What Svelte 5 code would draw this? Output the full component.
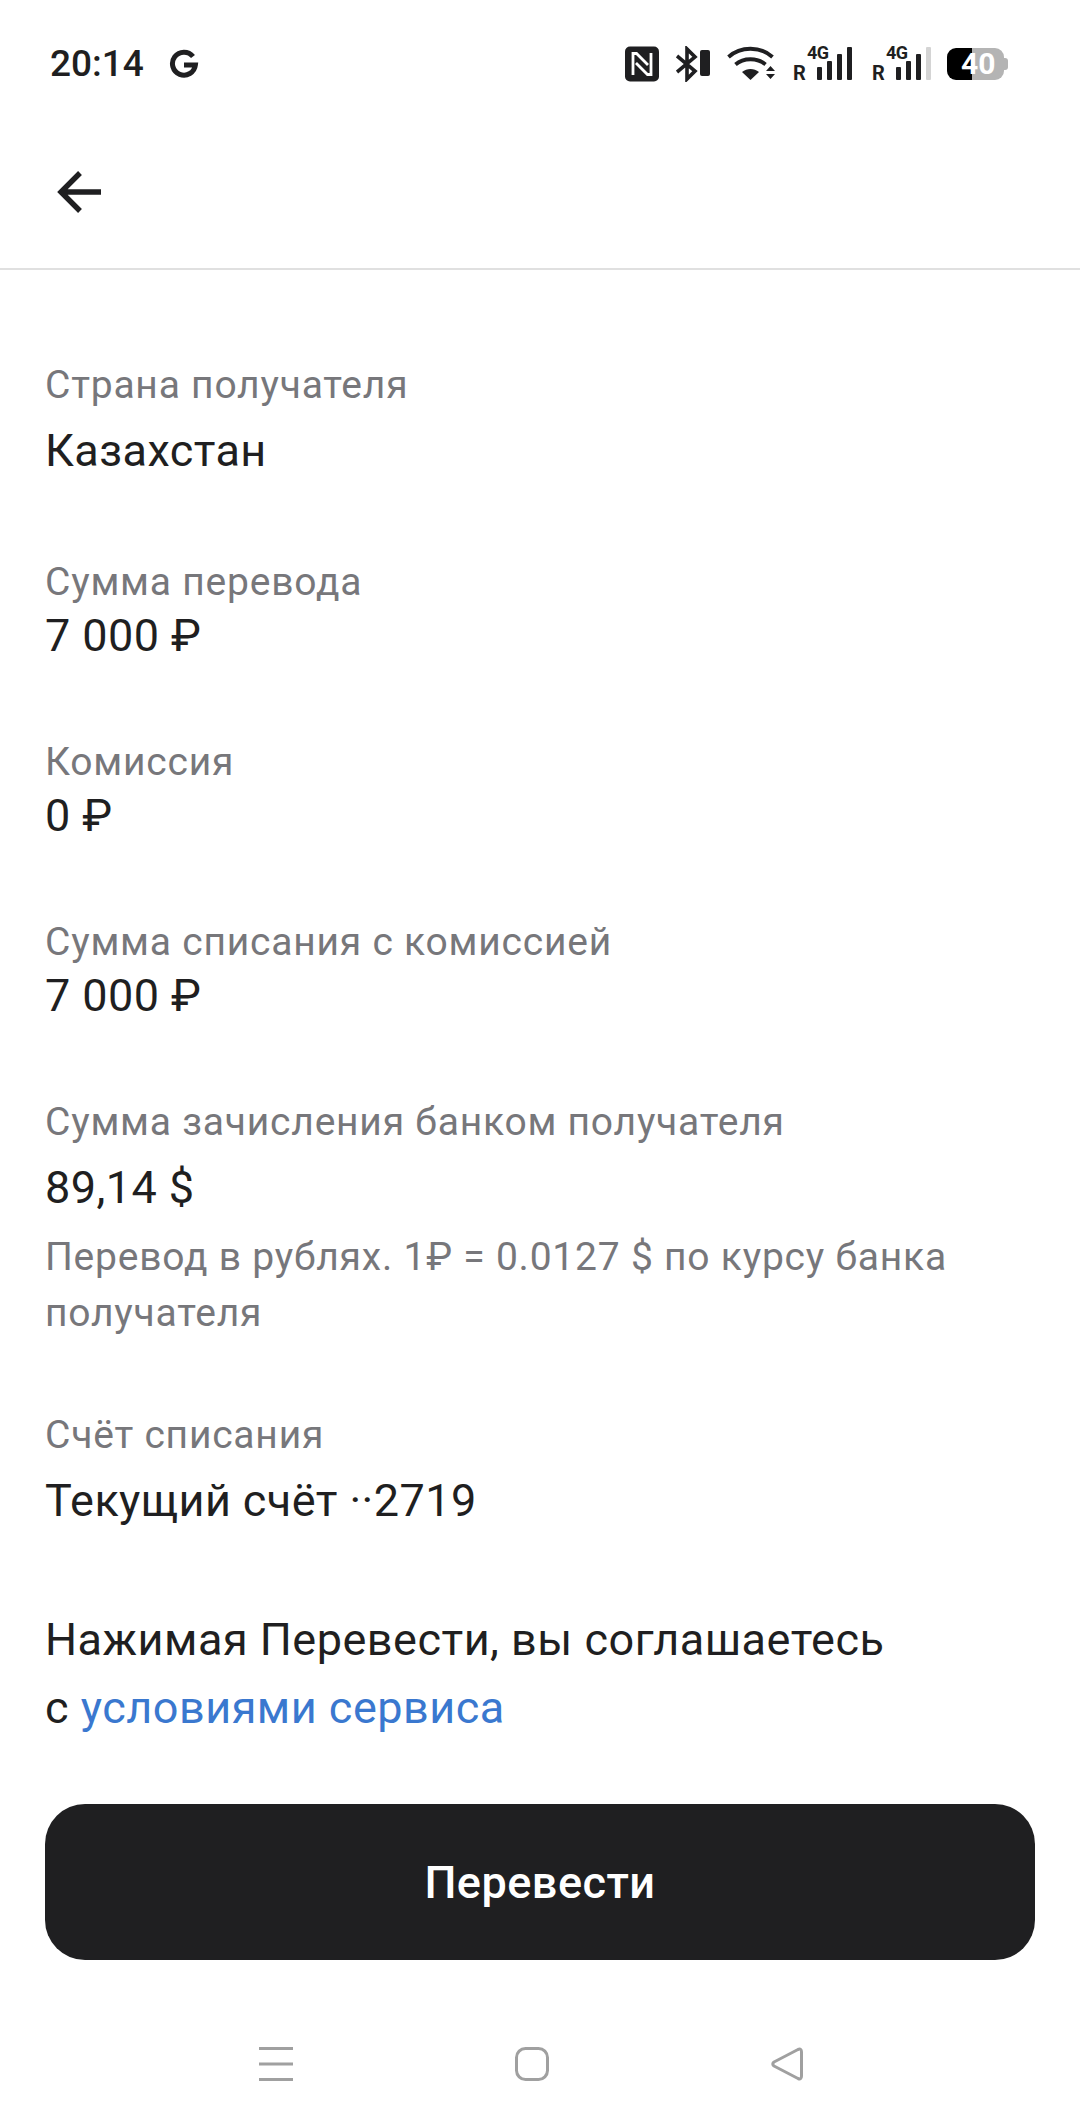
<script>
  const rows = [
    { label: 'Страна получателя', value: 'Казахстан', loose: true },
    { label: 'Сумма перевода', value: '7 000 ₽' },
    { label: 'Комиссия', value: '0 ₽' },
    { label: 'Сумма списания с комиссией', value: '7 000 ₽' },
    {
      label: 'Сумма зачисления банком получателя',
      value: '89,14 $',
      loose: true,
      note: 'Перевод в рублях. 1₽ = 0.0127 $ по курсу банка получателя'
    },
    { label: 'Счёт списания', value: 'Текущий счёт ··2719', loose: true }
  ];
</script>

<div class="screen">
  <header class="status">
    <div class="status-left">
      <span class="time">20:14</span>
      <svg class="g" width="30" height="30" viewBox="0 0 30 30">
        <path d="M24 7.500A11.500 11.500 0 1 0 26.400 16H15" fill="none" stroke="#1f1f21" stroke-width="5" />
      </svg>
    </div>
    <div class="status-icons">
      <svg width="34" height="36" viewBox="0 0 34 36">
        <rect y="0.500" width="34" height="35" rx="5" fill="#1f1f21" />
        <path d="M8 29V7.500h3.500L23 19" fill="none" stroke="#fff" stroke-width="2.800" />
        <path d="M26 7v21.500h-3.500L11 17" fill="none" stroke="#fff" stroke-width="2.800" />
      </svg>
      <svg width="34" height="36" viewBox="0 0 34 36">
        <path d="M1 10l18 15-8 8V3l8 8L1 26" fill="none" stroke="#1f1f21" stroke-width="3.600" />
        <rect x="24" y="4" width="10" height="26" rx="2" fill="#1f1f21" />
      </svg>
      <svg width="49" height="36" viewBox="0 0 49 36">
        <path d="M1.500 11c12-11 32-11 44 0M8.500 18.500c8-7 22-7 30 0" fill="none" stroke="#1f1f21" stroke-width="3.800" />
        <path d="M15 26c5-4 12-4 17 0l-8.500 8z" fill="#1f1f21" />
        <path d="M39 25l4.500-5 4.500 5zM39 28h9l-4.500 5z" fill="#1f1f21" />
      </svg>
      <div class="signal">
        <span class="roam">R</span>
        <span class="net">4G</span>
        <svg width="35" height="36" viewBox="0 0 35 36">
          <rect y="21" width="5" height="13" rx="1" fill="#1f1f21" />
          <rect x="10" y="15" width="5" height="19" rx="1" fill="#1f1f21" />
          <rect x="20" y="8" width="5" height="26" rx="1" fill="#1f1f21" />
          <rect x="30" y="1" width="5" height="33" rx="1" fill="#1f1f21" />
        </svg>
      </div>
      <div class="signal">
        <span class="roam">R</span>
        <span class="net">4G</span>
        <svg width="35" height="36" viewBox="0 0 35 36">
          <rect y="21" width="5" height="13" rx="1" fill="#1f1f21" />
          <rect x="10" y="15" width="5" height="19" rx="1" fill="#1f1f21" />
          <rect x="20" y="8" width="5" height="26" rx="1" fill="#1f1f21" />
          <rect x="30" y="1" width="5" height="33" rx="1" fill="#d4d4d4" />
        </svg>
      </div>
      <div class="battery">
        <span class="battery-text">40</span>
      </div>
    </div>
  </header>

  <nav class="topbar">
    <svg width="48" height="48" viewBox="0 0 48 48">
      <path d="M44 24H4M23 5L4 24l19 19" fill="none" stroke="#1f1f21" stroke-width="5.400" />
    </svg>
  </nav>

  <main class="content">
    {#each rows as row}
      <section class="row" class:loose={row.loose}>
        <div class="label">{row.label}</div>
        <div class="value">{row.value}</div>
        {#if row.note}
          <div class="note">{row.note}</div>
        {/if}
      </section>
    {/each}

    <p class="terms">Нажимая Перевести, вы соглашаетесь<br />с <a href="#terms">условиями сервиса</a></p>

    <button class="submit">Перевести</button>
  </main>

  <footer class="navbar">
    <svg width="34" height="34" viewBox="0 0 34 34">
      <path d="M0 1.500h34M0 17h34M0 32.500h34" fill="none" stroke="#a0a0a0" stroke-width="3.200" />
    </svg>
    <svg width="34" height="34" viewBox="0 0 34 34">
      <rect x="1.500" y="1.500" width="31" height="31" rx="9" fill="none" stroke="#a0a0a0" stroke-width="3" />
    </svg>
    <svg width="34" height="34" viewBox="0 0 34 34">
      <path d="M27 2.500L3 15Q0.500 17 3 19L27 31.500Q30.500 33 30.500 29V5Q30.500 1 27 2.500z" fill="none" stroke="#a0a0a0" stroke-width="3" stroke-linejoin="round" />
    </svg>
  </footer>
</div>

<style>
  :global(body) {
    margin: 0;
    background: #fff;
  }

  .screen {
    width: 1080px;
    height: 2120px;
    display: flex;
    flex-direction: column;
    font-family: Roboto, "Noto Sans", sans-serif;
    color: #1f1f21;
    background: #fff;
    overflow: hidden;
  }

  .status {
    height: 92px;
    padding: 35px 72px 0 50px;
    box-sizing: border-box;
    display: flex;
    justify-content: space-between;
    align-items: center;
  }

  .status-left {
    display: flex;
    align-items: center;
    gap: 25px;
  }

  .time {
    font-size: 37px;
    font-weight: 500;
  }

  .status-icons {
    display: flex;
    align-items: center;
    gap: 17px;
  }

  .signal {
    position: relative;
    width: 59px;
    height: 36px;
    margin-right: 3px;
    display: flex;
    justify-content: flex-end;
  }

  .roam {
    position: absolute;
    left: 0;
    bottom: 0;
    font-size: 20px;
    font-weight: 700;
    line-height: 18px;
  }

  .net {
    position: absolute;
    left: 14px;
    top: -1px;
    font-size: 18px;
    font-weight: 700;
    line-height: 16px;
    letter-spacing: -0.5px;
  }

  .battery {
    position: relative;
    width: 57px;
    height: 32px;
    margin-left: -4px;
    margin-right: 4px;
    border-radius: 9px;
    background: linear-gradient(90deg, #000 25px, #b4b4b4 25px);
  }

  .battery::after {
    content: '';
    position: absolute;
    right: -4px;
    top: 10px;
    width: 4px;
    height: 12px;
    border-radius: 0 3px 3px 0;
    background: #b4b4b4;
  }

  .battery-text {
    position: absolute;
    left: 14px;
    top: 0;
    font-size: 30px;
    font-weight: 700;
    line-height: 32px;
    color: #fff;
  }

  .topbar {
    height: 178px;
    padding: 24px 0 0 57px;
    box-sizing: border-box;
    display: flex;
    align-items: center;
    border-bottom: 2px solid #e0e0e0;
  }

  .content {
    flex: 1;
    padding: 0 45px;
    display: flex;
    flex-direction: column;
  }

  .row {
    margin-top: 70px;
  }

  .row:first-child {
    margin-top: 91px;
  }

  .label {
    font-size: 39px;
    line-height: 48px;
    letter-spacing: 0.78px;
    color: #77777b;
  }

  .value {
    font-size: 45px;
    line-height: 56px;
    letter-spacing: 0.42px;
    margin-top: 2px;
    margin-bottom: 4px;
  }

  .row.loose .value {
    margin-top: 14px;
    margin-bottom: 9px;
  }

  .note {
    margin-top: 13px;
    font-size: 39px;
    line-height: 56px;
    letter-spacing: 0.78px;
    color: #77777b;
  }

  .terms {
    margin: 68px 0 0;
    font-size: 45px;
    line-height: 68px;
    letter-spacing: 0.5px;
  }

  .terms a {
    color: #3a78cf;
    text-decoration: none;
  }

  .submit {
    margin-top: 62px;
    height: 156px;
    border: 0;
    border-radius: 40px;
    background: #1f1f21;
    color: #fff;
    font-family: inherit;
    font-size: 45px;
    font-weight: 500;
    letter-spacing: 0.5px;
  }

  .navbar {
    padding: 0 0 39px 259px;
    display: flex;
    gap: 222px;
  }
</style>
